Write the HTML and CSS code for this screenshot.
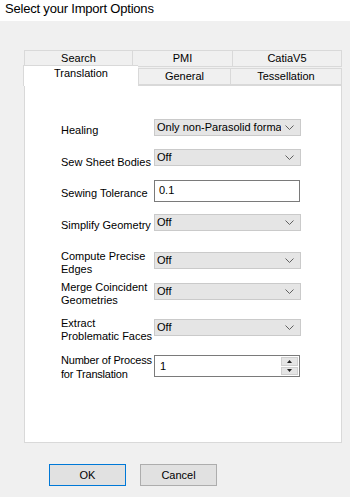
FILE: index.html
```html
<!DOCTYPE html>
<html>
<head>
  <title>Select your Import Options</title>
  <link rel="stylesheet" href="styles.css">
</head>
<body>
  <div class="window">
    <div class="title">Select your Import Options</div>

    <div class="content">
      <!-- Tabs -->
      <div class="tabs">
        <div class="tab-row">
          <div class="tab w-search">Search</div>
          <div class="tab w-pmi">PMI</div>
          <div class="tab w-catia">CatiaV5</div>
        </div>
        <div class="tab-row front">
          <div class="tab active w-translation">Translation</div>
          <div class="tab w-general">General</div>
          <div class="tab w-tess">Tessellation</div>
        </div>
      </div>

      <!-- Translation page -->
      <div class="panel">
        <div class="form">
          <div class="row h30">
            <label class="lbl single">Healing</label>
            <div class="combo"><span class="combo-text">Only non-Parasolid format</span><svg class="chev" width="9" height="6" viewBox="0 0 9 6"><polyline points="0.5,0.5 4.5,4.5 8.5,0.5" fill="none" stroke="#606060" stroke-width="1"/></svg></div>
          </div>
          <div class="row h31">
            <label class="lbl single low">Sew Sheet Bodies</label>
            <div class="combo"><span class="combo-text">Off</span><svg class="chev" width="9" height="6" viewBox="0 0 9 6"><polyline points="0.5,0.5 4.5,4.5 8.5,0.5" fill="none" stroke="#606060" stroke-width="1"/></svg></div>
          </div>
          <div class="row h34">
            <label class="lbl single mid">Sewing Tolerance</label>
            <div class="textbox">0.1</div>
          </div>
          <div class="row h38">
            <label class="lbl single">Simplify Geometry</label>
            <div class="combo"><span class="combo-text">Off</span><svg class="chev" width="9" height="6" viewBox="0 0 9 6"><polyline points="0.5,0.5 4.5,4.5 8.5,0.5" fill="none" stroke="#606060" stroke-width="1"/></svg></div>
          </div>
          <div class="row h31">
            <label class="lbl double">Compute Precise Edges</label>
            <div class="combo"><span class="combo-text">Off</span><svg class="chev" width="9" height="6" viewBox="0 0 9 6"><polyline points="0.5,0.5 4.5,4.5 8.5,0.5" fill="none" stroke="#606060" stroke-width="1"/></svg></div>
          </div>
          <div class="row h36">
            <label class="lbl double">Merge Coincident Geometries</label>
            <div class="combo"><span class="combo-text">Off</span><svg class="chev" width="9" height="6" viewBox="0 0 9 6"><polyline points="0.5,0.5 4.5,4.5 8.5,0.5" fill="none" stroke="#606060" stroke-width="1"/></svg></div>
          </div>
          <div class="row h36">
            <label class="lbl double">Extract Problematic Faces</label>
            <div class="combo"><span class="combo-text">Off</span><svg class="chev" width="9" height="6" viewBox="0 0 9 6"><polyline points="0.5,0.5 4.5,4.5 8.5,0.5" fill="none" stroke="#606060" stroke-width="1"/></svg></div>
          </div>
          <div class="row">
            <label class="lbl double up">Number of Process<br>for Translation</label>
            <div class="spinbox">
              <span class="spin-text">1</span>
              <div class="spin-btns">
                <div class="spin-btn"><svg width="5" height="3" viewBox="0 0 5 3"><polygon points="0,3 2.5,0 5,3" fill="#222"/></svg></div>
                <div class="spin-btn"><svg width="5" height="3" viewBox="0 0 5 3"><polygon points="0,0 5,0 2.5,3" fill="#222"/></svg></div>
              </div>
            </div>
          </div>
        </div>
      </div>

      <!-- Dialog buttons -->
      <div class="actions">
        <button class="btn default">OK</button>
        <button class="btn">Cancel</button>
      </div>
    </div>
  </div>
</body>
</html>
```

FILE: styles.css
```css
html, body {
  margin: 0;
  padding: 0;
}

body {
  width: 350px;
  height: 497px;
  overflow: hidden;
  background: #f0f0f0;
  font-family: "Liberation Sans", Arial, sans-serif;
  color: #000;
}

.title {
  height: 21px;
  background: #fff;
  padding-left: 5px;
  font-size: 13px;
  letter-spacing: -0.2px;
  line-height: 18px;
}

.content {
  padding: 29px 0 0 24px;
}

/* Tabs */
.tabs {
  width: 318px;
  font-size: 11px;
}

.tab-row {
  display: flex;
  height: 17px;
}

.tab-row.front {
  align-items: flex-end;
  height: 18px;
}

.tab {
  box-sizing: border-box;
  height: 17px;
  border: 1px solid #d9d9d9;
  border-right: none;
  background: #f0f0f0;
  text-align: center;
  line-height: 15px;
}

.tab:last-child {
  border-right: 1px solid #d9d9d9;
}

.tab.active {
  height: 21px;
  margin-left: -1px;
  margin-bottom: -1px;
  background: #fff;
  border-bottom: none;
  line-height: 15px;
  position: relative;
  z-index: 1;
}

.w-search { width: 108px; }
.w-pmi { width: 100px; }
.w-catia { width: 110px; }
.w-translation { width: 115px; }
.w-general { width: 92px; }
.w-tess { width: 112px; }

/* Page */
.panel {
  box-sizing: border-box;
  width: 318px;
  height: 358px;
  background: #fff;
  border: 1px solid #d9d9d9;
}

.form {
  padding: 33px 0 0 36px;
  font-size: 11px;
}

.row {
  display: flex;
  align-items: flex-start;
}

.h30 { height: 30px; }
.h31 { height: 31px; }
.h34 { height: 34px; }
.h36 { height: 36px; }
.h38 { height: 38px; }

.lbl {
  width: 93px;
  flex-shrink: 0;
}

.lbl.single {
  line-height: 17px;
  padding-top: 3px;
}

.lbl.single.low {
  padding-top: 5px;
}

.lbl.single.mid {
  padding-top: 5px;
}

.lbl.double {
  line-height: 13px;
  margin-top: -2px;
}

.lbl.double.up {
  margin-top: -2px;
  line-height: 14px;
  white-space: nowrap;
  letter-spacing: -0.2px;
}

.combo {
  box-sizing: border-box;
  width: 147px;
  height: 17px;
  display: flex;
  align-items: center;
  background: #e5e5e5;
  border: 1px solid #cacaca;
  padding: 0 6px 0 2px;
}

.combo-text {
  flex: 1;
  overflow: hidden;
  white-space: nowrap;
  font-size: 11px;
  line-height: 15px;
}

.chev {
  flex-shrink: 0;
  margin-left: 4px;
}

.textbox {
  box-sizing: border-box;
  width: 146px;
  height: 22px;
  border: 1px solid #7a7a7a;
  background: #fff;
  padding: 2px 4px;
  font-size: 11px;
  line-height: 15px;
}

.spinbox {
  box-sizing: border-box;
  width: 146px;
  height: 22px;
  border: 1px solid #7a7a7a;
  background: #fff;
  display: flex;
}

.spin-text {
  flex: 1;
  padding: 3px 5px;
  font-size: 11px;
  line-height: 15px;
}

.spin-btns {
  width: 17px;
  display: flex;
  flex-direction: column;
  gap: 1px;
  padding: 1px;
}

.spin-btn {
  flex: 1;
  background: #e5e5e5;
  border: 1px solid #cfcfcf;
  display: flex;
  align-items: center;
  justify-content: center;
}

/* Dialog buttons */
.actions {
  display: flex;
  gap: 14px;
  padding: 21px 0 0 25px;
}

.btn {
  box-sizing: border-box;
  width: 77px;
  height: 22px;
  background: #e1e1e1;
  border: 1px solid #adadad;
  font-family: "Liberation Sans", Arial, sans-serif;
  font-size: 11px;
  color: #000;
  padding: 0;
}

.btn.default {
  border-color: #0078d7;
}
```
